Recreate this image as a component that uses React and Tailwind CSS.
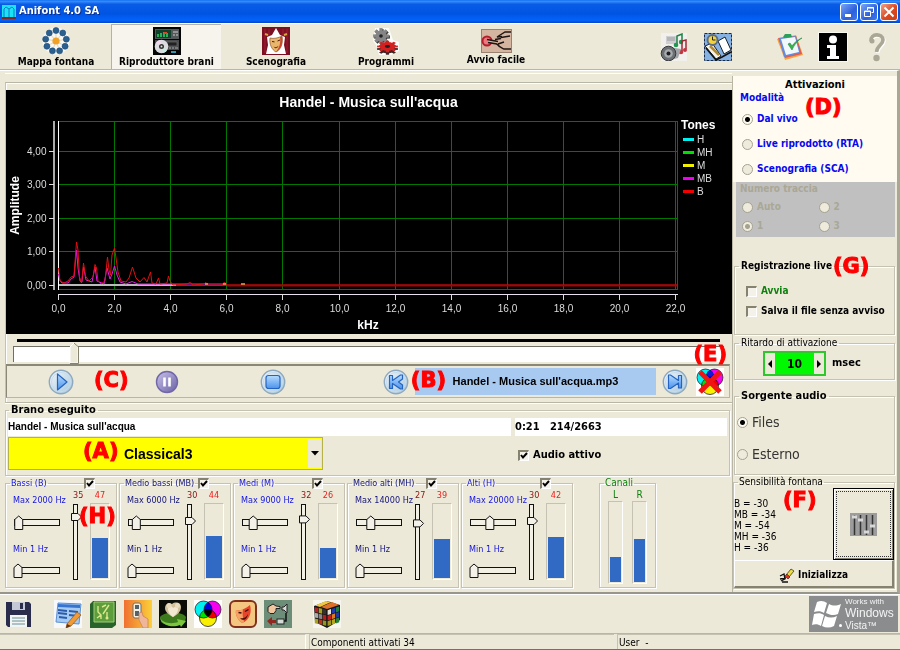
import React from "react";

const groove = "border border-[#c5c2b4] shadow-[1px_1px_0_#fff,inset_1px_1px_0_#fff]";

/* ---------- shared controls ---------- */

function Mark({ letter, className }) {
  return (
    <span
      className={`pointer-events-none absolute z-20 font-['DejaVu_Sans',sans-serif] text-[21px] leading-6 font-bold text-[#fe0000] [-webkit-text-stroke:1px_#fe0000] ${className}`}
    >
      ({letter})
    </span>
  );
}

function Check({ label, checked, labelClass = "", name, className = "" }) {
  return (
    <label className={`flex items-center gap-1 ${className}`}>
      <span className="relative block h-[11px] w-[11px] shrink-0">
        <input
          type="checkbox"
          defaultChecked={checked}
          aria-label={label ? undefined : name}
          className="peer block h-[11px] w-[11px] appearance-none border-t-2 border-l-2 border-r border-b border-t-[#85836f] border-l-[#85836f] border-r-white border-b-white bg-[#f4f2e8]"
        />
        <svg className="pointer-events-none absolute inset-0 hidden peer-checked:block" width="11" height="11" viewBox="0 0 11 11">
          <path d="M3 5 L5 7.5 L9 3" fill="none" stroke="#000" strokeWidth="2" />
        </svg>
      </span>
      {label && <span className={labelClass}>{label}</span>}
    </label>
  );
}

function Radio({ name, label, checked, disabled, labelClass = "", dot = "black" }) {
  const dotClass =
    dot === "black"
      ? "checked:bg-[radial-gradient(circle,#000_2px,#fdfbf0_3px)]"
      : "checked:bg-[radial-gradient(circle,#a5a291_2px,#f0eee0_3px)]";
  return (
    <label className="flex items-center gap-1">
      <input
        type="radio"
        name={name}
        defaultChecked={checked}
        disabled={disabled}
        className={`block h-[11px] w-[11px] shrink-0 appearance-none rounded-full border border-[#a5a291] bg-[#eeebdd] ${dotClass}`}
      />
      <span className={labelClass}>{label}</span>
    </label>
  );
}

function HSlider({ label, value }) {
  const x = 1 + value * 36;
  return (
    <span className="relative block h-4 w-12">
      <svg width="48" height="16" viewBox="0 0 48 16" className="block">
        <rect x="1.5" y="4.5" width="45" height="6" fill="#f2f0e4" stroke="#111" />
        <path d={`M${x} 14.5 V4.5 L${x + 4} 1 L${x + 8} 4.5 V14.5 Z`} fill="#f4f2e8" stroke="#111" />
      </svg>
      <input type="range" aria-label={label} defaultValue={value * 100} className="absolute inset-0 m-0 h-full w-full opacity-0" />
    </span>
  );
}

function VSlider({ label, value }) {
  const y = 14 + (35 - value) * 0.8;
  return (
    <span className="relative block h-[78px] w-3">
      <svg width="12" height="78" viewBox="0 0 12 78" className="block">
        <rect x="2.5" y="1.5" width="4" height="75" fill="#f2f0e4" stroke="#111" />
        <path d={`M0.5 ${y - 3.5} H7 L10.5 ${y} L7 ${y + 3.5} H0.5 Z`} fill="#f4f2e8" stroke="#111" />
      </svg>
      <input
        type="range"
        aria-label={label}
        defaultValue={value}
        className="absolute inset-0 m-0 h-full w-full opacity-0 [direction:rtl] [writing-mode:vertical-lr]"
      />
    </span>
  );
}

function Meter({ fill, className }) {
  return (
    <span className={`flex flex-col justify-end border border-t-[#c5c2b4] border-l-[#c5c2b4] border-r-white border-b-white p-px ${className}`}>
      <span className="block bg-[#316ac5]" style={{ height: `${fill}px` }} />
    </span>
  );
}

/* ---------- toolbar icons ---------- */

function FountainIcon() {
  const dots = Array.from({ length: 9 }, (_, i) => {
    const a = ((i * 40 - 90) * Math.PI) / 180;
    return [14 + 10.5 * Math.cos(a), 14 + 10.5 * Math.sin(a)];
  });
  return (
    <svg width="28" height="28" viewBox="0 0 28 28">
      <circle cx="14" cy="14" r="13.5" fill="#f8f8f4" />
      {dots.map(([x, y], i) => (
        <g key={i}>
          <line x1="14" y1="14" x2={x} y2={y} stroke="#e4d7bd" />
          <circle cx={x} cy={y} r="3" fill="#2b5f8e" stroke="#194a78" strokeWidth=".6" />
        </g>
      ))}
      <circle cx="14" cy="14" r="3.6" fill="#f2a127" />
    </svg>
  );
}

function DeckIcon() {
  return (
    <svg width="28" height="28" viewBox="0 0 28 28">
      <rect width="28" height="28" fill="#050505" />
      <rect x="2" y="2" width="24" height="10" fill="#55585a" />
      <rect x="3" y="3" width="15" height="8" fill="#10402a" />
      <path d="M4 10V7h2v3M7 10V6h2v4M10 10V5h2v5M13 10V6h2v4" fill="#26b05a" />
      <path d="M11 5h3v2h-3z" fill="#e0422c" />
      <path d="M20 5h5M20 8h2M23 8h2" stroke="#ccc" />
      <rect x="2" y="13" width="24" height="10" fill="#484a4c" />
      <path d="M14 15h10v4H14z" fill="#222" stroke="#777" strokeWidth=".6" />
      <path d="M16 21h2M19 21h2M22 21h3" stroke="#aaa" />
      <circle cx="8.5" cy="19.5" r="6.8" fill="#dcdce0" />
      <path d="M8.5 19.5L3 15.5A7 7 0 0 1 7 13z" fill="#f5d7f1" />
      <path d="M8.5 19.5L14 23a7 7 0 0 1-4 3z" fill="#c5eede" />
      <circle cx="8.5" cy="19.5" r="2.5" fill="#333" />
      <circle cx="8.5" cy="19.5" r="1" fill="#ddd" />
      <path d="M18 25h5" stroke="#3bc8ed" strokeWidth="1.5" />
    </svg>
  );
}

function StageIcon() {
  return (
    <svg width="28" height="28" viewBox="0 0 28 28">
      <rect width="28" height="28" fill="#7a1022" />
      <path d="M3 2v24M7 2v24M21 2v24M25 2v24" stroke="#a51a30" />
      <path d="M14 1l4 7 5 2-1 8 2 9H4l2-9-1-8 5-2z" fill="#fff" />
      <path d="M3 7l3 1M25 7l-3 1" stroke="#d8a53f" strokeWidth="2" />
      <path d="M8 11c4 1 8 0 12-2 1 6 0 13-6 16-4-2-7-8-6-14z" fill="#e8b76c" stroke="#7c3c1b" strokeWidth=".6" />
      <path d="M18 10c1 0 1 0 2-1 1 6 0 13-6 16 3-4 5-8 4-15z" fill="#c9482e" />
      <path d="M10 14.5l2.5.4M15.5 14l2.5-1" stroke="#4c1a0d" strokeWidth="1" />
      <path d="M11.5 19.5c2 1 4 .5 5-1-.4 3-3.500 4-5 1z" fill="#a52818" />
    </svg>
  );
}

function Gear({ cx, cy, r, fill, flat = 1 }) {
  const teeth = Array.from({ length: 8 }, (_, i) => i * 45);
  return (
    <g transform={`translate(${cx} ${cy}) scale(1 ${flat})`}>
      {teeth.map((t) => (
        <rect key={t} x="-1.6" y={-r - 2.4} width="3.2" height="4" fill={fill} transform={`rotate(${t})`} />
      ))}
      <circle r={r} fill={fill} />
      <circle r={r / 3} fill="#222" />
    </g>
  );
}

function GearsIcon() {
  return (
    <svg width="28" height="28" viewBox="0 0 28 28">
      <path d="M3 1h14l4 12 6 2v9l-8 4H7L4 18 1 14z" fill="#fff" opacity=".8" />
      <Gear cx={10} cy={10} r={5.5} fill="#3d3d3d" />
      <Gear cx={9} cy={9} r={5.5} fill="#858585" />
      <Gear cx={15.5} cy={22} r={8} fill="#3b2525" flat={0.55} />
      <Gear cx={15.5} cy={19.5} r={8} fill="#d6201f" flat={0.55} />
    </svg>
  );
}

function HandIcon() {
  return (
    <svg width="31" height="24" viewBox="0 0 31 24">
      <rect x=".5" y=".5" width="30" height="23" fill="#d5b5a0" stroke="#99806f" />
      <circle cx="6" cy="12" r="4.5" fill="#ed7880" stroke="#b0202c" strokeWidth="2" />
      <path d="M6 10.5l11 2v2.500l-10-2z" fill="#d5b5a0" />
      <path d="M30 3h-6l-8 5 5-.5M20 8.500l9-1.500M6 10.500l11 2M7 13.500l9 1.500M14 10.500l6-1M17 15l6-2M16 15c2 3 5 4 7 5h7" fill="none" stroke="#201612" strokeWidth="1.4" />
    </svg>
  );
}

function MusicIcon() {
  return (
    <svg width="28" height="28" viewBox="0 0 28 28">
      <rect x="1" y="0" width="26" height="28" fill="#f1f0ec" />
      <path d="M6 3h11v8H6z" fill="#cfcfd2" />
      <path d="M7 5h8M7 7h8" stroke="#9b9b9b" />
      <path d="M17 12V3l5-2v8" fill="none" stroke="#1b8246" strokeWidth="1.5" />
      <circle cx="16" cy="12" r="2.3" fill="#239653" />
      <circle cx="21" cy="9" r="2.2" fill="#239653" />
      <path d="M22 18V8l4-1v9" fill="none" stroke="#a42833" strokeWidth="1.5" />
      <circle cx="21" cy="19" r="2.3" fill="#c33541" />
      <circle cx="25" cy="17" r="2" fill="#c33541" />
      <path d="M9 14l12 2-3 9-8 2z" fill="#a4a6a9" />
      <circle cx="8.5" cy="20.5" r="7.3" fill="#6c7074" stroke="#34373a" />
      <circle cx="8.5" cy="20.5" r="4.3" fill="#a7abae" />
      <circle cx="8.5" cy="20.5" r="2" fill="#1e1f21" />
    </svg>
  );
}

function PlannerIcon() {
  return (
    <svg width="28" height="28" viewBox="0 0 28 28">
      <rect x=".5" y=".5" width="27" height="27" fill="#86b2e3" stroke="#102c55" strokeDasharray="3 1" />
      <path d="M1 13l7-3 9 13-5 3z" fill="#f6f4ea" stroke="#14202e" />
      <path d="M14 8l7-4 6 13-7 4z" fill="#fff" stroke="#14202e" />
      <path d="M2 15l10 12 6-3 9-5" fill="none" stroke="#111" strokeWidth="1.6" />
      <path d="M6 13l9 9" stroke="#b5892f" strokeWidth="2.5" />
      <circle cx="8.5" cy="7" r="5" fill="#f4d33d" stroke="#5c6c84" strokeWidth="2" />
      <path d="M8.5 3.5V7h3" fill="none" stroke="#222" />
    </svg>
  );
}

function ClipboardIcon() {
  return (
    <svg width="28" height="28" viewBox="0 0 28 28">
      <path d="M1 6l19-4 7 20-18 5z" fill="#f5a643" />
      <path d="M2 5l18-2 6 18-17 4z" fill="#e6594d" />
      <path d="M3 5l17-2 4 17-16 4z" fill="#5f8de0" />
      <path d="M5 6l14-2 4 15-13 3z" fill="#f1f8fc" />
      <path d="M7 4l2-3 6 0 1 3-8 1z" fill="#2aa15b" />
      <path d="M12 11l4 6C18 12 22 7 26 5c-5 2-8 5-10 8l-2-3z" fill="#38b54a" stroke="#21853a" strokeWidth=".6" />
    </svg>
  );
}

function InfoIcon() {
  return (
    <svg width="30" height="30" viewBox="0 0 30 30">
      <rect width="30" height="30" fill="#f8f7f0" />
      <rect x="1" y="1" width="28" height="28" fill="#000" />
      <circle cx="15" cy="7.5" r="4" fill="#fff" />
      <path d="M9 13h9v11h3v3H9v-3h3v-8H9z" fill="#fff" />
    </svg>
  );
}

function HelpIcon() {
  return (
    <svg width="18" height="30" viewBox="0 0 18 30">
      <g fill="none" stroke="#fff" strokeWidth="3.6" transform="translate(1 1)">
        <path d="M3 9c-1-8 12-8 12-1 0 5-6 5-6.5 12" />
      </g>
      <path d="M3 9c-1-8 12-8 12-1 0 5-6 5-6.5 12" fill="none" stroke="#aaa796" strokeWidth="3.6" />
      <circle cx="4" cy="9" r="2.5" fill="#aaa796" />
      <circle cx="8.5" cy="26" r="3.2" fill="#aaa796" />
    </svg>
  );
}

/* ---------- window chrome ---------- */

function TitleBar() {
  const btn = "flex h-[18px] w-[18px] items-center justify-center rounded-[3px] border border-white";
  return (
    <header className="flex h-[23px] items-center bg-[linear-gradient(#0a6cf0_0,#3b8ffc_5%,#0a5ce6_18%,#0054e3_60%,#0363fb_88%,#0145c8_100%)] px-[2px]">
      <svg width="14" height="14" viewBox="0 0 14 14">
        <rect width="14" height="14" fill="#19e4f5" />
        <path d="M2 13V4l2-2 3 2v9M7 4l3-2 2 2v9" fill="none" stroke="#1678c8" />
        <rect y="12" width="14" height="2" fill="#85251f" />
      </svg>
      <h1 className="ml-[3px] text-[11px] font-bold text-white [text-shadow:1px_1px_0_#0a2f8f]">Anifont 4.0 SA</h1>
      <div className="ml-auto flex gap-[2px]">
        <button aria-label="Riduci a icona" className={`${btn} bg-[linear-gradient(135deg,#7ba6f5,#2c60dc_60%,#3e78ec)]`}>
          <svg width="12" height="12" viewBox="0 0 12 12"><path d="M2 9.5h6" stroke="#fff" strokeWidth="3" /></svg>
        </button>
        <button aria-label="Ripristina" className={`${btn} bg-[linear-gradient(135deg,#7ba6f5,#2c60dc_60%,#3e78ec)]`}>
          <svg width="12" height="12" viewBox="0 0 12 12">
            <path d="M4.5 4V1.5h6v5H8.5M1.5 5h6v5.5h-6zM1 5.5h7M4 2h7" fill="none" stroke="#fff" />
          </svg>
        </button>
        <button aria-label="Chiudi" className={`${btn} bg-[linear-gradient(135deg,#f0a088,#dc4a20_55%,#c8401a)]`}>
          <svg width="12" height="12" viewBox="0 0 12 12"><path d="M1.5 1.5l9 9M10.5 1.5l-9 9" stroke="#fff" strokeWidth="2" /></svg>
        </button>
      </div>
    </header>
  );
}

const tools = [
  ["Mappa fontana", FountainIcon],
  ["Riproduttore brani", DeckIcon],
  ["Scenografia", StageIcon],
  ["Programmi", GearsIcon],
  ["Avvio facile", HandIcon],
];

function Toolbar() {
  return (
    <nav className="flex h-[47px] border-t border-b border-t-white border-b-[#b9b6a6] pl-px">
      {tools.map(([label, Icon], i) => (
        <button
          key={label}
          className={`flex w-[110px] flex-col items-center justify-center pt-px text-[10px] leading-[13px] font-bold ${
            i === 1 ? "border-t border-l border-[#b5b2a2] bg-[#f6f4ec]" : ""
          }`}
        >
          <Icon />
          {label}
        </button>
      ))}
      <div className="ml-auto flex items-center pr-[14px]">
        <button aria-label="Audio"><MusicIcon /></button>
        <button aria-label="Agenda" className="ml-4"><PlannerIcon /></button>
        <button aria-label="Verifica" className="ml-11"><ClipboardIcon /></button>
        <button aria-label="Informazioni" className="ml-[14px]"><InfoIcon /></button>
        <button aria-label="Aiuto" className="ml-5"><HelpIcon /></button>
      </div>
    </nav>
  );
}

/* ---------- spectrum chart ---------- */

const xTicks = Array.from({ length: 12 }, (_, i) => ({ x: Math.round(58 + i * 56.1) + 0.5, label: `${i * 2},0` }));
const yTicks = [4, 3, 2, 1, 0].map((v, i) => ({ y: Math.round(151 + i * 33.4) + 0.5, label: `${v},00` }));
const tones = [
  ["H", "#00f0f0"],
  ["MH", "#00e000"],
  ["M", "#f0f000"],
  ["MB", "#f000f0"],
  ["B", "#f00000"],
];

function Spectrum() {
  return (
    <div className="bg-black">
      <svg viewBox="6 90 726 244" className="block h-[244px] w-full" fontFamily="'Liberation Sans', Arial, sans-serif" role="img" aria-label="Spettro">
        <text x="368.5" y="107" fill="#fff" fontSize="14" fontWeight="700" textAnchor="middle">Handel - Musica sull'acqua</text>
        <g stroke="#007800" shapeRendering="crispEdges">
          {xTicks.slice(1).map((t) => (
            <line key={t.x} x1={t.x} x2={t.x} y1="121" y2="290" />
          ))}
          {yTicks.map((t) => (
            <line key={t.y} x1="58" x2="677" y1={t.y} y2={t.y} />
          ))}
          <path d="M58 121.5H677.5V289.5H58" fill="none" />
        </g>
        <path d="M54 121v169" stroke="#aaa" strokeWidth="2" />
        <path d="M58.5 121v169" stroke="#fff" />
        <path d="M58 294.5h620" stroke="#e8e0ee" />
        {yTicks.map((t) => (
          <g key={t.y}>
            <line x1="49" x2="54" y1={t.y} y2={t.y} stroke="#ddd" />
            <text x="46.5" y={t.y + 3.5} fill="#ddd" fontSize="10" textAnchor="end">{t.label}</text>
          </g>
        ))}
        {xTicks.map((t) => (
          <g key={t.x}>
            <line x1={t.x} x2={t.x} y1="294" y2="300" stroke="#ddd" />
            <text x={t.x} y="312" fill="#ddd" fontSize="10" textAnchor="middle">{t.label}</text>
          </g>
        ))}
        <path d="M59 285h117" stroke="#bbb" strokeWidth="2" />
        <path
          d="M58.5 274L60 281 62 283H68L71 279 74 277 76.5 250 78 268 80 281 82 282 83.5 267 86 280 92 282 95 267 97 281 104 284 107 268 110 279 112 274 114.5 266 117 275 120 282 126 284 132 281.5 138 284 150 284H226"
          fill="none"
          stroke="#e818e8"
        />
        <path
          d="M58.5 268L60 281 64 283 68 281 71 277 74 276 76.5 242 78 250 79.5 277 81.5 283 83.5 263 85.5 276 89 281 93 277 95 264.5 96.5 268 98 281 101 284 105 281 107.5 257 109 270 110.5 275 112 255 114.5 248 116 258 118 272 121 281 126 282 129 278 132.5 267 136 278 140 282 144 277.5 147 282 150.5 272 152 283 156 284 158.5 278 160 284 167 283 168.5 276 170 281 173 285 187 284 190 282.5 193 285 204 284 206 282.5 208 285 222 285 224.5 282 227 285H677"
          fill="none"
          stroke="#e01010"
        />
        <path d="M227 285.5H677" stroke="#a00808" strokeWidth="2" />
        <path d="M205 284h3M223 284h3M241 284h4" stroke="#f0a050" strokeWidth="1.5" />
        <text x="681" y="129" fill="#fff" fontSize="12" fontWeight="700">Tones</text>
        {tones.map(([label, color], i) => (
          <g key={label}>
            <rect x="683" y={138 + i * 13} width="11" height="3" fill={color} />
            <text x="697" y={143 + i * 13} fill="#ddd" fontSize="10">{label}</text>
          </g>
        ))}
        <text transform="translate(19 205.5) rotate(-90)" fill="#fff" fontSize="12" fontWeight="700" textAnchor="middle">Amplitude</text>
        <text x="368" y="329" fill="#fff" fontSize="12" fontWeight="700" textAnchor="middle">kHz</text>
      </svg>
    </div>
  );
}

/* ---------- transport ---------- */

function RoundIcon({ kind }) {
  return (
    <svg width="26" height="26" viewBox="0 0 26 26">
      <defs>
        <linearGradient id={`ring-${kind}`} x1="0" y1="0" x2="1" y2="1">
          <stop offset="0" stopColor={kind === "pause" ? "#c9c3e8" : "#f4f8fb"} />
          <stop offset="1" stopColor={kind === "pause" ? "#6a5fa6" : "#a5c6dd"} />
        </linearGradient>
        <linearGradient id={`blue-${kind}`} x1="0" y1="0" x2="0" y2="1">
          <stop offset="0" stopColor="#b5dcff" />
          <stop offset="1" stopColor="#4c93ec" />
        </linearGradient>
      </defs>
      <circle cx="13" cy="13" r={kind === "pause" ? 10.5 : 11.7} fill={`url(#ring-${kind})`} stroke={kind === "pause" ? "#7066a8" : "#8ea9be"} strokeWidth="1.4" />
      {kind !== "pause" && <circle cx="13" cy="13" r="9.5" fill="none" stroke="#c5dced" />}
      <g fill={`url(#blue-${kind})`} stroke="#2464c0" strokeWidth="1.2" strokeLinejoin="round">
        {kind === "play" && <path d="M9.5 5v16l9.5-8z" />}
        {kind === "stop" && <rect x="6" y="6.5" width="14" height="13" rx="2.5" />}
        {kind === "prev" && <path d="M6.5 6.5h3v5l8-5.5h2v4l-4 3 4 3v4h-2l-8-5.5v5h-3z" />}
        {kind === "next" && <path d="M19.5 6.5h-3v5l-8-5.5h-2v13.5h2l8-5.5v5h3z" />}
      </g>
      {kind === "pause" && <path d="M10.5 8.5v9M15.5 8.5v9" stroke="#fff" strokeWidth="2.6" />}
    </svg>
  );
}

function Venn({ crossed }) {
  return (
    <svg width="28" height="28" viewBox="0 0 28 28">
      <rect width="28" height="28" fill="#fff" />
      <g stroke="#222" strokeWidth=".8" className="[isolation:isolate]">
        <circle cx="9.5" cy="9.5" r="8.5" fill="#00f0f0" className="mix-blend-multiply" />
        <circle cx="18.5" cy="9.5" r="8.5" fill="#f800f0" className="mix-blend-multiply" />
        <circle cx="14" cy="18" r="8.5" fill="#f8f000" className="mix-blend-multiply" />
      </g>
      {crossed && <path d="M4 4l20 20M24 4L4 24" stroke="#f01414" strokeWidth="5" />}
      {crossed && <circle cx="14" cy="5.5" r="3" fill="#1818d8" />}
    </svg>
  );
}

function Transport() {
  return (
    <div className="relative mr-[2px] flex h-[34px] items-center border border-t-2 border-[#8a8877] border-r-[#b9b6a6] border-b-[#b9b6a6]">
      <div className="flex flex-1 items-center gap-20 pl-[41px]">
        <button aria-label="Riproduci"><RoundIcon kind="play" /></button>
        <button aria-label="Pausa"><RoundIcon kind="pause" /></button>
        <button aria-label="Ferma"><RoundIcon kind="stop" /></button>
      </div>
      <button aria-label="Precedente"><RoundIcon kind="prev" /></button>
      <output className="ml-[6px] flex h-[27px] w-[241px] items-center justify-center bg-[#a8c9f0] font-['Liberation_Sans',Arial,sans-serif] text-[11px] font-bold">
        Handel - Musica sull'acqua.mp3
      </output>
      <button aria-label="Successivo" className="ml-[6px]"><RoundIcon kind="next" /></button>
      <button aria-label="Disattiva colori" className="ml-2 mr-[5px]"><Venn crossed /></button>
      <Mark letter="C" className="top-[2px] left-[87px]" />
      <Mark letter="B" className="top-[2px] right-[283px]" />
      <Mark letter="E" className="-top-[24px] right-[2px]" />
    </div>
  );
}

function Player() {
  return (
    <section className="border-t border-b border-l border-t-[#b9b6a6] border-b-[#b9b6a6] border-l-[#c5c2b4] pt-[7px] pb-1 shadow-[0_1px_0_#fff,inset_1px_1px_0_#fff]">
      <Spectrum />
      <div className="mt-[5px] mr-3 ml-[11px] h-[3px] bg-black" />
      <div className="relative mr-2 ml-[7px] h-[22px] pt-1">
        <div className="h-4 border-t border-l border-[#716f64] bg-white" />
        <svg className="absolute top-0 left-[56px]" width="11" height="22" viewBox="0 0 11 22">
          <path d="M1 21V5l4-4 4 4v16z" fill="#ece9d8" stroke="#fff" />
          <path d="M5 1l4.5 4v16.5H1" fill="none" stroke="#85836f" />
        </svg>
        <input type="range" aria-label="Posizione" defaultValue="8" className="absolute inset-0 h-full w-full opacity-0" />
      </div>
      <Transport />
    </section>
  );
}

function Track() {
  return (
    <fieldset className={`relative mr-[2px] pb-[5px] ${groove}`}>
      <legend className="ml-[3px] px-[2px] text-[11px] leading-[14px] font-bold">Brano eseguito</legend>
      <div className="mx-[2px] mt-px flex gap-1 leading-[18px] font-bold">
        <output className="h-[18px] flex-1 bg-white font-['Liberation_Sans',Arial,sans-serif] text-[10px]">Handel - Musica sull'acqua</output>
        <output className="h-[18px] w-[212px] bg-white text-[11px] whitespace-pre">0:21   214/2663</output>
      </div>
      <div className="mt-px ml-[2px] flex items-center">
        <div className="relative h-[33px] w-[315px]">
          <select aria-label="Brano" className="h-full w-full appearance-none border border-[#b5b24a] bg-[#ffff00] pl-[115px] font-['Liberation_Sans',Arial,sans-serif] text-sm font-bold">
            <option>Classical3</option>
          </select>
          <span className="pointer-events-none absolute top-[2px] right-[2px] bottom-[2px] flex w-[13px] items-center justify-center bg-[#ece9d8]">
            <svg width="8" height="5" viewBox="0 0 8 5"><path d="M0 0h8L4 4.5z" fill="#000" /></svg>
          </span>
          <Mark letter="A" className="top-[2px] left-[75px]" />
        </div>
        <Check label="Audio attivo" checked className="mt-1 ml-[195px]" labelClass="text-[11px] font-bold" />
      </div>
    </fieldset>
  );
}

/* ---------- frequency bands ---------- */

const bands = [
  { name: "Bassi (B)", max: "Max 2000 Hz", pos: 0.02, gain: 35, level: 47, fill: 40, bright: true },
  { name: "Medio bassi (MB)", max: "Max 6000 Hz", pos: 0.12, gain: 30, level: 44, fill: 42, bright: false },
  { name: "Medi (M)", max: "Max 9000 Hz", pos: 0.2, gain: 32, level: 26, fill: 30, bright: true },
  { name: "Medio alti (MH)", max: "Max 14000 Hz", pos: 0.3, gain: 27, level: 39, fill: 39, bright: false },
  { name: "Alti (H)", max: "Max 20000 Hz", pos: 0.44, gain: 30, level: 42, fill: 41, bright: true },
];

function Band({ band }) {
  return (
    <fieldset className={`relative w-[112px] text-[9px] ${groove}`}>
      <legend className={`ml-1 px-px leading-3 whitespace-nowrap ${band.bright ? "text-[#1414e0]" : "text-[#14147c]"}`}>{band.name}</legend>
      <Check name={`${band.name} attivo`} checked className="absolute -top-[11px] left-[78px] bg-[#ece9d8]" />
      <div className="flex pl-[7px]">
        <div className={`flex w-[58px] flex-col ${band.bright ? "text-[#1414e0]" : "text-[#14147c]"}`}>
          <span className="mt-1 h-[14px] leading-[14px] whitespace-nowrap">{band.max}</span>
          <span className="mt-2"><HSlider label={band.max} value={band.pos} /></span>
          <span className="mt-[11px] h-[14px] leading-[14px]">Min 1 Hz</span>
          <span className="mt-[7px]"><HSlider label={`${band.name} Min`} value={0} /></span>
        </div>
        <div className="flex w-[17px] flex-col text-[#8c1010]">
          <span className="h-[14px] pl-[2px] leading-3">{band.gain}</span>
          <VSlider label={`${band.name} guadagno`} value={band.gain} />
        </div>
        <div className="flex flex-col items-center pl-[2px] text-[#f01c1c]">
          <span className="h-[14px] leading-3">{band.level}</span>
          <Meter fill={band.fill} className="h-[77px] w-5" />
        </div>
      </div>
    </fieldset>
  );
}

function Bands() {
  return (
    <section className="relative mt-px flex gap-[2px] pb-1">
      {bands.map((b) => (
        <Band key={b.name} band={b} />
      ))}
      <fieldset className={`ml-6 w-[57px] text-[10px] text-[#108010] ${groove}`}>
        <legend className="ml-1 px-px leading-3">Canali</legend>
        <div className="flex justify-center gap-[9px] pb-[3px] text-center">
          <div>
            <div className="h-3 leading-3">L</div>
            <Meter fill={25} className="h-[83px] w-[15px]" />
          </div>
          <div>
            <div className="h-3 leading-3">R</div>
            <Meter fill={43} className="h-[83px] w-[15px]" />
          </div>
        </div>
      </fieldset>
      <Mark letter="H" className="top-[27px] left-[74px]" />
    </section>
  );
}

/* ---------- right column ---------- */

function Activations() {
  const blue = "text-[10px] leading-3 font-bold whitespace-nowrap text-[#0808f0]";
  const grey = "text-[10px] leading-3 font-bold text-[#aaa796]";
  return (
    <section className="relative">
      <div className="h-[106px] bg-[#fffbf0] pt-[2px]">
        <h2 className="text-center text-[11px] leading-[14px] font-bold">Attivazioni</h2>
        <fieldset className="pl-[7px]">
          <legend className="text-[10px] leading-3 font-bold text-[#0808f0]">Modalità</legend>
          <div className="mt-[9px] flex flex-col gap-[13px] pl-[2px]">
            <Radio name="mode" label="Dal vivo" checked labelClass={blue} />
            <Radio name="mode" label="Live riprodotto (RTA)" labelClass={blue} />
            <Radio name="mode" label="Scenografia (SCA)" labelClass={blue} />
          </div>
        </fieldset>
        <Mark letter="D" className="top-[19px] left-[72px]" />
      </div>
      <fieldset disabled className="mr-[2px] ml-[3px] h-[55px] bg-[#c0c0c0] pl-1">
        <legend className="float-left w-full pt-px text-[10px] leading-3 font-bold text-[#aaa796]">Numero traccia</legend>
        <div className="clear-left grid grid-cols-2 gap-y-[7px] pt-[6px] pl-[2px]">
          <Radio name="track" label="Auto" labelClass={grey} dot="grey" />
          <Radio name="track" label="2" labelClass={grey} dot="grey" />
          <Radio name="track" label="1" checked labelClass={grey} dot="grey" />
          <Radio name="track" label="3" labelClass={grey} dot="grey" />
        </div>
      </fieldset>
    </section>
  );
}

function LiveRecording() {
  return (
    <fieldset className={`relative mt-[23px] mr-[2px] ml-px h-[75px] ${groove}`}>
      <legend className="ml-1 px-[2px] text-[10px] leading-3 font-bold">Registrazione live</legend>
      <div className="mt-[13px] flex flex-col gap-2 pl-[11px] text-[10px] leading-3 font-bold whitespace-nowrap">
        <Check label="Avvia" labelClass="text-[#108010]" />
        <Check label="Salva il file senza avviso" />
      </div>
      <Mark letter="G" className="-top-[18px] left-[98px]" />
    </fieldset>
  );
}

function Delay() {
  return (
    <fieldset className={`mt-[2px] mr-[2px] ml-px h-[43px] ${groove}`}>
      <legend className="ml-1 px-[2px] text-[10px] leading-3">Ritardo di attivazione</legend>
      <div className="flex items-center gap-[6px] pt-[2px] pl-7 text-[11px] font-bold">
        <div className="flex h-[25px] w-[63px] items-stretch border-2 border-[#2cc82c] bg-[#ece9d8]">
          <button aria-label="Diminuisci" className="flex w-[10px] items-center justify-center">
            <svg width="4" height="8" viewBox="0 0 4 8"><path d="M4 0v8L0 4z" /></svg>
          </button>
          <input aria-label="Ritardo di attivazione" defaultValue="10" className="w-0 min-w-0 flex-1 bg-[#00f800] text-center text-xs font-bold" />
          <button aria-label="Aumenta" className="flex w-[10px] items-center justify-center">
            <svg width="4" height="8" viewBox="0 0 4 8"><path d="M0 0v8l4-4z" /></svg>
          </button>
        </div>
        msec
      </div>
    </fieldset>
  );
}

function AudioSource() {
  return (
    <fieldset className={`mt-[9px] mr-[2px] ml-px h-[86px] ${groove}`}>
      <legend className="ml-1 px-[2px] text-[11px] leading-[14px] font-bold">Sorgente audio</legend>
      <div className="flex flex-col gap-3 pt-[9px] pl-[2px] text-sm leading-5 text-[#333]">
        <Radio name="source" label="Files" checked />
        <Radio name="source" label="Esterno" />
      </div>
    </fieldset>
  );
}

function Sensitivity() {
  return (
    <fieldset className={`relative mt-px mr-[2px] ${groove}`}>
      <legend className="ml-1 px-px text-[10px] leading-3">Sensibilità fontana</legend>
      <div className="flex justify-between">
        <ul className="pt-[10px] text-[10px] leading-[11px] whitespace-nowrap">
          <li>B = -30</li>
          <li>MB = -34</li>
          <li>M = -54</li>
          <li>MH = -36</li>
          <li>H = -36</li>
        </ul>
        <button aria-label="Regola sensibilità" className="h-[72px] w-[61px] border border-black p-[2px] shadow-[inset_1px_1px_0_#fff,inset_-1px_-1px_0_#85836f]">
          <span className="flex h-full w-full items-center justify-center border border-dotted border-[#333]">
            <svg width="27" height="23" viewBox="0 0 27 23">
              <rect width="27" height="23" fill="#9c9c9c" />
              <path d="M4.5 2v20M10.5 2v20M16.5 2v20M22.5 2v20" stroke="#333" strokeWidth="1.5" />
              <path d="M2 4h5M8 7h5M14 19h5M20 13h5" stroke="#d8d8d8" strokeWidth="3" />
            </svg>
          </span>
        </button>
      </div>
      <button className="flex h-[28px] w-full items-center justify-center gap-[3px] border-t border-l border-r-2 border-b-2 border-t-white border-l-white border-r-[#85836f] border-b-[#85836f] pt-[2px] text-[10px] font-bold">
        <svg width="16" height="16" viewBox="0 0 16 16">
          <path d="M1 9l4-2 1 5-4 2M1 12l6-1M3 15h6" fill="none" stroke="#111" strokeWidth="1.3" />
          <path d="M7 8l5-6 3 2-5 6z" fill="#f0dc38" stroke="#222" strokeWidth=".7" />
          <path d="M6 9l2-2 3 3-2 2z" fill="#e03020" stroke="#222" strokeWidth=".6" />
        </svg>
        Inizializza
      </button>
      <Mark letter="F" className="top-0 left-[49px]" />
    </fieldset>
  );
}

/* ---------- bottom bar ---------- */

function FloppyIcon() {
  return (
    <svg width="27" height="27" viewBox="0 0 27 27">
      <path d="M1 1h23l2 2v23H3l-2-2z" fill="#2a2c4c" />
      <rect x="7" y="1" width="13" height="8" fill="#c5c8d5" />
      <rect x="15" y="2" width="3" height="6" fill="#2a2c4c" />
      <rect x="5" y="14" width="17" height="12" fill="#f1f5f4" />
      <path d="M7 17h13M7 20h13M7 23h13" stroke="#6c8f95" />
    </svg>
  );
}

function FormIcon() {
  return (
    <svg width="28" height="28" viewBox="0 0 28 28">
      <rect width="28" height="28" fill="#f6f8fb" />
      <path d="M4 3l23 1-2 20-23-2z" fill="#a5cbf3" stroke="#5c8fd0" />
      <path d="M4 4l22 1v3L4 7z" fill="#3674cf" />
      <path d="M4 10l9 1M4 13l9 1M5 17l8 1M15 11l9 1M15 15l9 1" stroke="#2b5dab" strokeWidth="1.8" />
      <path d="M13 24L23 12l4 3-10 11-5 2z" fill="#f09b35" stroke="#94541a" strokeWidth=".7" />
      <path d="M13 24l4 2-5 2z" fill="#5c351b" />
    </svg>
  );
}

function CircuitIcon() {
  return (
    <svg width="28" height="28" viewBox="0 0 28 28">
      <path d="M4 1h23v24l-4 3H1V4z" fill="#28632b" />
      <path d="M5 2h20v20H5z" fill="#5d9d3c" stroke="#a2cd78" />
      <path d="M9 6v6l3 3v4M13 7l4-2M20 5l-6 9M18 12v5M8 18l4-3" stroke="#dbe98b" fill="none" strokeWidth="1.4" />
      <circle cx="18" cy="18" r="1.5" fill="#dbe98b" />
    </svg>
  );
}

function SwitchIcon() {
  return (
    <svg width="28" height="28" viewBox="0 0 28 28">
      <defs>
        <linearGradient id="warm">
          <stop offset="0" stopColor="#f07030" />
          <stop offset="1" stopColor="#fbd03a" />
        </linearGradient>
      </defs>
      <rect width="28" height="28" fill="url(#warm)" />
      <rect x="9" y="3" width="8" height="15" rx="2" fill="#f2efe2" stroke="#6c7070" />
      <path d="M11 5h4v4h-4zM11 11h4v5h-4z" fill="#536168" />
      <path d="M15 13l3-1 1 4 5 3v9h-5l-4-8z" fill="#efb69a" stroke="#c37f5a" strokeWidth=".7" />
    </svg>
  );
}

function HeartIcon() {
  return (
    <svg width="28" height="28" viewBox="0 0 28 28">
      <rect width="28" height="28" fill="#0b0d08" />
      <path d="M1 17c3-5 22-6 26 0l-1 5c-6 5-18 5-24 0z" fill="#3c7a1c" />
      <path d="M6 8c0-4 4-6 7-4 4-3 9-1 9 3 0 5-4 8-8 10-4-2-8-5-8-9z" fill="#d3c19b" />
      <path d="M9 9c1-3 4-3 5-1 2-2 5-1 5 1 0 4-3 6-5 8-3-2-5-5-5-8z" fill="#f3e9d2" />
      <circle cx="10" cy="5.5" r="2.5" fill="#e9dcbd" />
      <circle cx="18.5" cy="5.5" r="2.5" fill="#e9dcbd" />
      <path d="M1 17c2 7 13 7 18 5l-1-3 9 2-5 6-1-2C14 28 2 26 1 17z" fill="#7cc63e" />
    </svg>
  );
}

function DramaIcon() {
  return (
    <svg width="28" height="28" viewBox="0 0 28 28">
      <rect x="1" y="1" width="26" height="26" rx="5" fill="#f3c780" stroke="#81311b" strokeWidth="2" />
      <path d="M7 10c5 1 9-1 14-5 2 7 0 15-8 18-4-3-7-8-6-13z" fill="#e6442b" />
      <path d="M7 10c3 1 5 0 7-1-1 5 0 9 1 13l-2 1c-4-3-7-8-6-13z" fill="#f5a263" />
      <path d="M9.5 12.5l3 .5M16 11.5l3.5-2" stroke="#3b0d07" strokeWidth="1.4" />
      <path d="M11 18c3 1 6 0 8-4-.5 5-5 8-8 4z" fill="#4b1009" />
    </svg>
  );
}

function PlugIcon() {
  return (
    <svg width="28" height="28" viewBox="0 0 28 28">
      <rect width="28" height="28" fill="#6c8e79" />
      <path d="M4 7l5-3 3 2 4 .5v2h-4v2l-2 3-4 0-2-2z" fill="#efc6a0" stroke="#222" />
      <path d="M18 7h2l3-3v9l-3-3h-2z" fill="#d7dbd7" stroke="#222" />
      <path d="M22 13v8h-4" fill="none" stroke="#111" strokeWidth="1.5" />
      <path d="M3 21l5-4v3h4v3H8v3z" fill="#8f281f" />
      <rect x="13" y="19" width="7" height="5" fill="#d7dbd7" stroke="#222" />
    </svg>
  );
}

function CubeIcon() {
  const left = ["#b82020", "#a8a020", "#333", "#aaa", "#888", "#b81c1c", "#a8a020", "#c03018", "#8c9820"];
  const right = ["#e8e4d8", "#2038b0", "#1d8040", "#c02020", "#e07820", "#2038a0", "#a09820", "#b4a820", "#288038"];
  return (
    <svg width="28" height="28" viewBox="0 0 28 28">
      <rect width="28" height="28" fill="#f6f5ef" />
      <path d="M1 6L14 1l13 4v15l-13 8L2 22z" fill="#161616" />
      <path d="M2 5.5L13 1l5 1L7 7z" fill="#f0c840" />
      <path d="M8 7l11-5 7 3-12 4z" fill="#e07028" />
      {left.map((c, i) => (
        <rect key={i} width="3.4" height="4.8" fill={c} transform={`matrix(1 .22 0 1 ${1.8 + (i % 3) * 4} ${7.2 + (i % 3) * 0.9 + Math.floor(i / 3) * 5.6})`} />
      ))}
      {right.map((c, i) => (
        <rect key={i} width="3.4" height="4.8" fill={c} transform={`matrix(1 -.32 0 1 ${14.6 + (i % 3) * 4.1} ${10.2 - (i % 3) * 1.3 + Math.floor(i / 3) * 5.5})`} />
      ))}
    </svg>
  );
}

function VistaBadge() {
  return (
    <div className="flex h-9 w-[89px] items-center gap-[2px] bg-[#8a8c8e] pl-[3px] font-['Liberation_Sans',Arial,sans-serif] text-[#f4f4f4]">
      <svg width="31" height="30" viewBox="0 0 31 30" className="shrink-0" fill="#fff">
        <path d="M5 3c4-2 7-1 10 1l-3 10c-3-2-6-2-10-1zM17 5c4 2 7 2 12 0l-3 10c-4 2-8 1-12-1zM2 15c4-1 7-1 10 1L9 27c-3-2-6-2-9-1zM13 17c4 2 8 2 12 0l-3 10c-4 2-8 2-12 0z" />
        <circle cx="28.5" cy="26.5" r="1.5" />
      </svg>
      <span className="block">
        <span className="block text-[8px] leading-[9px]">Works with</span>
        <span className="block text-xs leading-[14px]">Windows</span>
        <span className="block text-[10px] leading-3">Vista™</span>
      </span>
    </div>
  );
}

const shortcuts = [
  ["Moduli", FormIcon],
  ["Circuito", CircuitIcon],
  ["Interruttore", SwitchIcon],
  ["Effetti", HeartIcon],
  ["Colori", Venn],
  ["Maschera", DramaIcon],
  ["Collegamenti", PlugIcon],
];

export default function App() {
  return (
    <div className="flex min-h-screen flex-col bg-[#ece9d8] font-['DejaVu_Sans_Condensed','DejaVu_Sans',sans-serif] text-black">
      <TitleBar />
      <Toolbar />
      <main className="flex border-t border-r-[3px] border-b-2 border-t-white border-r-[#aaa796] border-b-[#98968a]">
        <div className="mt-[2px] ml-[5px] min-w-0 flex-1 border-t border-white pt-2">
          <Player />
          <Track />
          <Bands />
        </div>
        <aside className="mt-[5px] w-[165px] shrink-0 border-l border-[#b9b6a6]">
          <Activations />
          <LiveRecording />
          <Delay />
          <AudioSource />
          <Sensitivity />
        </aside>
      </main>
      <footer>
        <div className="flex h-10 items-center border-t border-b border-t-white border-b-[#b9b6a6] pl-[5px]">
          <button aria-label="Salva"><FloppyIcon /></button>
          <div className="ml-[22px] flex gap-[7px]">
            {shortcuts.map(([label, Icon]) => (
              <button key={label} aria-label={label}><Icon /></button>
            ))}
          </div>
          <button aria-label="Cubo" className="ml-[21px]"><CubeIcon /></button>
          <div className="ml-auto pr-[2px]"><VistaBadge /></div>
        </div>
        <div className="flex h-[15px] gap-[3px] text-[10px] leading-[15px]">
          <div className="w-[306px] border-t border-r border-t-[#c5c2b4] border-r-white" />
          <div className="w-[305px] border-t border-l border-[#c5c2b4] pl-px">Componenti attivati 34</div>
          <div className="flex-1 border-t border-l border-[#c5c2b4] pl-px whitespace-pre">User  -</div>
        </div>
        <div className="flex h-[2px]">
          <div className="w-[82px] bg-[#3c9a3c]" />
          <div className="flex-1 bg-[#3a78e0]" />
        </div>
      </footer>
    </div>
  );
}
